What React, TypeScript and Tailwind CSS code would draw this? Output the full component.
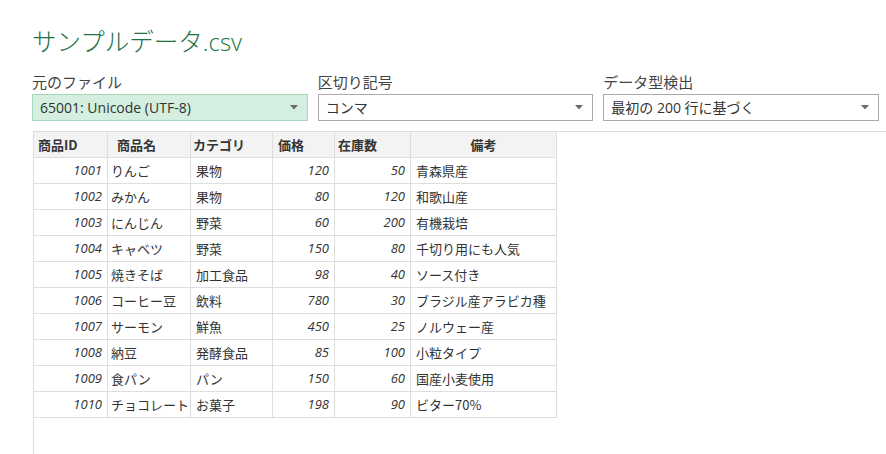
import React from "react"

interface Item {
  id: number
  name: string
  category: string
  price: number
  stock: number
  note: string
}

const items: Item[] = [
  { id: 1001, name: "りんご", category: "果物", price: 120, stock: 50, note: "青森県産" },
  { id: 1002, name: "みかん", category: "果物", price: 80, stock: 120, note: "和歌山産" },
  { id: 1003, name: "にんじん", category: "野菜", price: 60, stock: 200, note: "有機栽培" },
  { id: 1004, name: "キャベツ", category: "野菜", price: 150, stock: 80, note: "千切り用にも人気" },
  { id: 1005, name: "焼きそば", category: "加工食品", price: 98, stock: 40, note: "ソース付き" },
  { id: 1006, name: "コーヒー豆", category: "飲料", price: 780, stock: 30, note: "ブラジル産アラビカ種" },
  { id: 1007, name: "サーモン", category: "鮮魚", price: 450, stock: 25, note: "ノルウェー産" },
  { id: 1008, name: "納豆", category: "発酵食品", price: 85, stock: 100, note: "小粒タイプ" },
  { id: 1009, name: "食パン", category: "パン", price: 150, stock: 60, note: "国産小麦使用" },
  { id: 1010, name: "チョコレート", category: "お菓子", price: 198, stock: 90, note: "ビター70%" },
]

const jp = "font-['Meiryo_UI','Noto_Sans_CJK_JP',sans-serif]"
const num = "font-['Open_Sans','Noto_Sans_CJK_JP',sans-serif] italic text-[13px] text-right pr-[5px]"
const rowGrid = "grid grid-cols-[74px_83px_82px_62px_76px_146px] w-[523px] h-[26px] border-b border-[#dedede]"
const cell = "border-r border-[#dedede] flex items-center overflow-hidden whitespace-nowrap"

function Arrow() {
  return (
    <svg width="8" height="5" viewBox="0 0 8 5" className="shrink-0">
      <path d="M0 0 H8 L4 4.5 Z" fill="#6b6b6b" />
    </svg>
  )
}

function Select({ label, value, active }: { label: string; value: string; active?: boolean }) {
  return (
    <div className="flex flex-col">
      <div className={`${jp} text-[15px] leading-[20px] text-[#444] mb-[2px]`}>{label}</div>
      <div
        className={`h-[27px] flex items-center justify-between pl-[7px] pr-[9px] border ${
          active ? "bg-[#d4efdf] border-[#a6d9bb]" : "bg-white border-[#ababab]"
        }`}
      >
        <span className="font-['Open_Sans','Noto_Sans_CJK_JP',sans-serif] text-[14px] text-[#333]">{value}</span>
        <Arrow />
      </div>
    </div>
  )
}

export default function App() {
  return (
    <div className="w-[886px] h-[454px] bg-white overflow-hidden flex flex-col">
      <div className="pl-[32px] pt-[25px]">
        <h1 className="text-[24.5px] leading-[32px] font-light text-[#217346] font-['Noto_Sans_CJK_JP',sans-serif]">
          サンプルデータ<span className="font-['Open_Sans',sans-serif] text-[24px]">.csv</span>
        </h1>
      </div>

      <div className="grid grid-cols-3 gap-[10px] pl-[32px] pr-[7px] mt-[14px]">
        <Select label="元のファイル" value="65001: Unicode (UTF-8)" active />
        <Select label="区切り記号" value="コンマ" />
        <Select label="データ型検出" value="最初の 200 行に基づく" />
      </div>

      <div className="mt-[10px] ml-[33px] flex-1 border-t border-l border-[#dcdcdc]">
        <div className={`${rowGrid} bg-[#f3f3f3] ${jp} text-[13px] font-bold text-[#333]`}>
          <div className={`${cell} pl-[4px]`}>商品ID</div>
          <div className={`${cell} pl-[9px]`}>商品名</div>
          <div className={`${cell} pl-[2px]`}>カテゴリ</div>
          <div className={`${cell} pl-[5px]`}>価格</div>
          <div className={`${cell} pl-[3px]`}>在庫数</div>
          <div className={`${cell} justify-center`}>備考</div>
        </div>
        {items.map((it) => (
          <div key={it.id} className={`${rowGrid} text-[#333]`}>
            <div className={`${cell} justify-end ${num}`}>{it.id}</div>
            <div className={`${cell} ${jp} text-[13px] pl-[3px]`}>{it.name}</div>
            <div className={`${cell} ${jp} text-[13px] pl-[5px]`}>{it.category}</div>
            <div className={`${cell} justify-end ${num}`}>{it.price}</div>
            <div className={`${cell} justify-end ${num}`}>{it.stock}</div>
            <div className={`${cell} ${jp} text-[13px] pl-[5px]`}>{it.note}</div>
          </div>
        ))}
      </div>
    </div>
  )
}
